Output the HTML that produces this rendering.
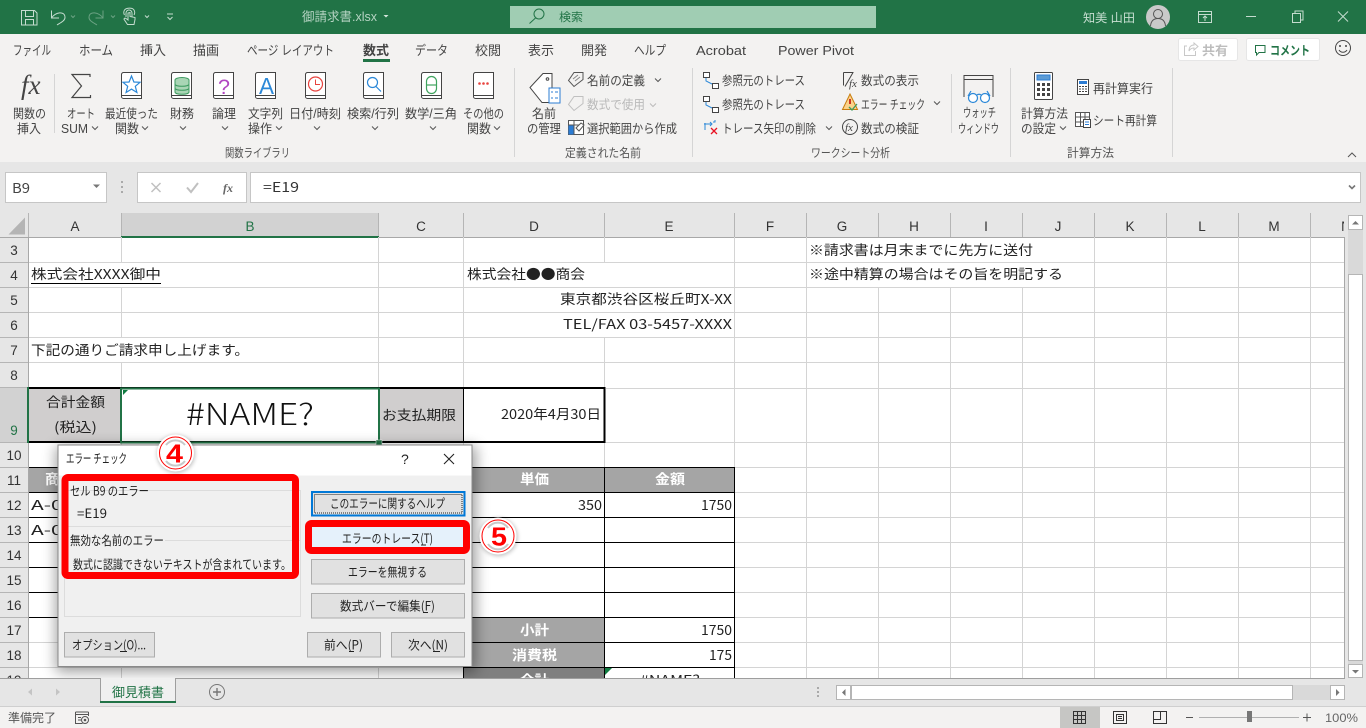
<!DOCTYPE html>
<html lang="ja"><head><meta charset="utf-8"><title>御請求書.xlsx</title>
<style>
html,body{margin:0;padding:0;background:#fff;width:1366px;height:728px;overflow:hidden}
svg{display:block;font-family:"Liberation Sans","Noto Sans CJK JP",sans-serif}
text{white-space:pre}
.t{font-size:12.5px;fill:#444}
.g{font-size:12px;fill:#555}
.tab{font-size:13px;fill:#444}
.c{font-size:13.5px;fill:#222;font-family:"Noto Sans CJK JP","Liberation Sans",sans-serif}
.w{font-size:13.5px;fill:#fff;font-family:"Noto Sans CJK JP","Liberation Sans",sans-serif}
.hd{font-size:13.5px;fill:#333;text-anchor:middle}
.d{font-size:12.5px;fill:#222;font-family:"Noto Sans CJK JP","Liberation Sans",sans-serif}
.ic{fill:none;stroke:#555;stroke-width:1}
.tb{fill:none;stroke:#c5dccf;stroke-width:1}
.gl{stroke:#d4d4d4;stroke-width:1}
.bk{stroke:#000;stroke-width:1}
.btn{fill:#e1e1e1;stroke:#adadad;stroke-width:1}
</style></head><body>
<svg width="1366" height="728" viewBox="0 0 1366 728" xmlns="http://www.w3.org/2000/svg">
<defs>
<path id="chev" d="M-3 -1.5L0 1.5L3 -1.5" fill="none" stroke="#555" stroke-width="1"/>
<g id="book"><path d="M.5 23V2.5a2 2 0 0 1 2-2h18v26H2.5a2 2 0 0 1-2-2z" fill="#fff" stroke="#444"/><path d="M1 23.5h19.5" stroke="#444" fill="none"/></g>
<clipPath id="sheet"><rect x="0" y="237" width="1345" height="441"/></clipPath>
<clipPath id="hdr"><rect x="0" y="213" width="1344" height="25"/></clipPath>
<filter id="sh" x="-10%" y="-15%" width="120%" height="130%"><feGaussianBlur stdDeviation="7"/></filter>
<filter id="sh2" x="-40%" y="-40%" width="180%" height="180%"><feGaussianBlur stdDeviation="2"/></filter>
</defs>

<!-- Title bar -->
<rect width="1366" height="34" fill="#217346"/>
<g class="tb">
<path d="M21.5 10.5h13l2.5 2.5v12h-15.5zM25.5 10.5v6h8v-6M25.5 25v-5.500h8v5.500"/>
<path d="M51.500 10.500v7.500h7.500M51.500 18C55 12 65 10.500 65 17.500C65 21 60 23 57 25"/>
<path d="M103 10.500v7.500h-7.500M103 18C99 12 89 10.500 89 17.500C89 21 94 23 97 25" opacity=".45"/>
<path d="M126 17v-4a3 3 0 0 1 6 0v4M124.500 15a5 5 0 0 1 0-5c2-2.500 8-2.500 9.500 0a5 5 0 0 1 0 5M128 13v7l-2-1.500c-1.500-1-2.500.5-1.500 1.500l3 4.500h6.500l1-5v-2l-5-1v-4z"/>
<path d="M71 15.500l2 2 2-2M111 15.500l2 2 2-2" opacity=".45"/>
<path d="M145 15.500l2 2 2-2M167 14h6M167.500 17l2.500 2.500 2.500-2.500"/>
</g>
<text x="302" y="21" font-size="12.500" fill="#b5d3c2" textLength="75" lengthAdjust="spacingAndGlyphs">御請求書.xlsx</text>
<path d="M383.500 15h5l-2.500 2.500z" fill="#d5e6dc"/>
<rect x="510" y="6" width="366" height="22" fill="#a0cdb3"/>
<circle cx="539" cy="14" r="5" fill="none" stroke="#217346"/><path d="M535.500 18l-6 5.500" stroke="#217346" fill="none"/>
<text x="559" y="21" font-size="11.500" fill="#217346" textLength="24" lengthAdjust="spacingAndGlyphs">検索</text>
<text x="1083" y="22" font-size="12" fill="#c8dfd2" textLength="52" lengthAdjust="spacingAndGlyphs">知美 山田</text>
<circle cx="1158" cy="17" r="12" fill="#c9c9c9"/>
<circle cx="1158" cy="14" r="4.500" fill="none" stroke="#555"/><path d="M1150.500 26c.5-5 3-7.500 7.500-7.500s7 2.500 7.500 7.500" fill="none" stroke="#555"/>
<g class="tb">
<path d="M1198.500 11.500h13v11h-13zM1198.500 14.500h13M1205 21v-5M1203 18l2-2 2 2"/>
<path d="M1246 16.500h10"/>
<path d="M1292.500 13.500h8v9h-8zM1295 13.500v-2.500h8v9h-2.500"/>
<path d="M1338 11.500l10 10M1348 11.500l-10 10"/>
</g>

<!-- Ribbon -->
<rect y="34" width="1366" height="128" fill="#f3f2f1"/>
<text class="tab" x="13" y="55" textLength="38" lengthAdjust="spacingAndGlyphs">ファイル</text>
<text class="tab" x="79" y="55" textLength="34" lengthAdjust="spacingAndGlyphs">ホーム</text>
<text class="tab" x="140" y="55" textLength="26" lengthAdjust="spacingAndGlyphs">挿入</text>
<text class="tab" x="193" y="55" textLength="26" lengthAdjust="spacingAndGlyphs">描画</text>
<text class="tab" x="247" y="55" textLength="87" lengthAdjust="spacingAndGlyphs">ページ レイアウト</text>
<text class="tab" x="363" y="55" textLength="26" lengthAdjust="spacingAndGlyphs" font-weight="bold">数式</text>
<rect x="363" y="59" width="27" height="3" fill="#217346"/>
<text class="tab" x="415" y="55" textLength="33" lengthAdjust="spacingAndGlyphs">データ</text>
<text class="tab" x="475" y="55" textLength="26" lengthAdjust="spacingAndGlyphs">校閲</text>
<text class="tab" x="528" y="55" textLength="26" lengthAdjust="spacingAndGlyphs">表示</text>
<text class="tab" x="581" y="55" textLength="26" lengthAdjust="spacingAndGlyphs">開発</text>
<text class="tab" x="634" y="55" textLength="32" lengthAdjust="spacingAndGlyphs">ヘルプ</text>
<text class="tab" x="696" y="55" textLength="50" lengthAdjust="spacingAndGlyphs" font-size="12.500">Acrobat</text>
<text class="tab" x="778" y="55" textLength="76" lengthAdjust="spacingAndGlyphs">Power Pivot</text>
<rect x="1178.500" y="38.500" width="59" height="22" rx="2" fill="#fff" stroke="#e6e6e6"/>
<path d="M1187 46h-2.500v9.500h11V51M1189 51c0-4 2-6 5-6v-2l4 3.500-4 3.500v-2c-2 0-4 1-5 3z" fill="none" stroke="#c8c8c8"/>
<text x="1202" y="55" font-size="12.500" fill="#bdbdbd" font-weight="bold" textLength="26" lengthAdjust="spacingAndGlyphs">共有</text>
<rect x="1246.500" y="38.500" width="73" height="22" rx="2" fill="#fff" stroke="#e6e6e6"/>
<path d="M1255.500 45.500h9.500v7h-6l-2.500 2.500v-2.500h-1z" fill="none" stroke="#217346"/>
<text x="1270" y="55" font-size="12.500" fill="#217346" font-weight="bold" textLength="40" lengthAdjust="spacingAndGlyphs">コメント</text>
<circle cx="1343" cy="48" r="7.500" fill="none" stroke="#444"/><circle cx="1340" cy="46" r="1" fill="#444"/><circle cx="1346" cy="46" r="1" fill="#444"/><path d="M1339 50c2 3 6 3 8 0" fill="none" stroke="#444"/>

<g stroke="#d5d5d5" fill="none"><path d="M54.500 74v59M514.500 68v89M692.500 68v89M951.500 74v59M1010.500 68v89M1172.500 68v89"/></g>

<!-- Function library -->
<text x="21" y="94" font-family="Liberation Serif,serif" font-style="italic" font-size="27" fill="#444">fx</text>
<path d="M90 77v-2.500H72L81.500 86 72 97.500h18.500V95" fill="none" stroke="#444" stroke-width="1.200"/>
<use href="#book" x="121" y="72"/><use href="#book" x="171" y="72"/><use href="#book" x="213" y="72"/><use href="#book" x="255" y="72"/><use href="#book" x="305" y="72"/><use href="#book" x="363" y="72"/><use href="#book" x="421" y="72"/><use href="#book" x="473" y="72"/>
<path d="M131.500 76l2.400 6 6.100.3-4.700 4 1.600 6.200-5.400-3.400-5.400 3.400 1.600-6.200-4.700-4 6.100-.3z" fill="none" stroke="#2b88d8" stroke-width="1.200"/>
<g fill="#a9d5b5" stroke="#3c9a5f"><ellipse cx="182" cy="80" rx="7" ry="2.500"/><path d="M175 80v12c0 3 14 3 14 0V80M175 84c0 3 14 3 14 0M175 88c0 3 14 3 14 0" /></g>
<text x="218" y="94" font-size="21" fill="#b146c2" textLength="12" lengthAdjust="spacingAndGlyphs">?</text>
<text x="259" y="94" font-size="23" fill="#2b88d8" textLength="15" lengthAdjust="spacingAndGlyphs">A</text>
<circle cx="315.500" cy="84" r="7" fill="none" stroke="#e8433e" stroke-width="1.200"/><path d="M315.500 79.500V84.500H320" fill="none" stroke="#e8433e"/>
<circle cx="372.500" cy="82.500" r="5" fill="none" stroke="#2b88d8" stroke-width="1.200"/><path d="M376 86.500l5 5" stroke="#2b88d8" stroke-width="1.200"/>
<rect x="426.500" y="76.500" width="10" height="17" rx="5" fill="none" stroke="#3fa35e" stroke-width="1.200"/><path d="M427 85h9" stroke="#3fa35e" stroke-width="1.200"/>
<g fill="#e8433e"><circle cx="479.500" cy="83.500" r="1.300"/><circle cx="483.500" cy="83.500" r="1.300"/><circle cx="487.500" cy="83.500" r="1.300"/></g>

<text class="t" x="13" y="118" textLength="33" lengthAdjust="spacingAndGlyphs">関数の</text>
<text class="t" x="17" y="133" textLength="24" lengthAdjust="spacingAndGlyphs">挿入</text>
<text class="t" x="67" y="118" textLength="28" lengthAdjust="spacingAndGlyphs">オート</text>
<text class="t" x="61" y="133" textLength="27" lengthAdjust="spacingAndGlyphs">SUM</text><use href="#chev" x="95" y="128"/>
<text class="t" x="105" y="118" textLength="53" lengthAdjust="spacingAndGlyphs">最近使った</text>
<text class="t" x="115" y="133" textLength="24" lengthAdjust="spacingAndGlyphs">関数</text><use href="#chev" x="145" y="128"/>
<text class="t" x="170" y="118" textLength="24" lengthAdjust="spacingAndGlyphs">財務</text><use href="#chev" x="183" y="128"/>
<text class="t" x="212" y="118" textLength="24" lengthAdjust="spacingAndGlyphs">論理</text><use href="#chev" x="225" y="128"/>
<text class="t" x="248" y="118" textLength="35" lengthAdjust="spacingAndGlyphs">文字列</text>
<text class="t" x="248" y="133" textLength="24" lengthAdjust="spacingAndGlyphs">操作</text><use href="#chev" x="279" y="128"/>
<text class="t" x="289" y="118" textLength="52" lengthAdjust="spacingAndGlyphs">日付/時刻</text><use href="#chev" x="317" y="128"/>
<text class="t" x="347" y="118" textLength="52" lengthAdjust="spacingAndGlyphs">検索/行列</text><use href="#chev" x="375" y="128"/>
<text class="t" x="405" y="118" textLength="52" lengthAdjust="spacingAndGlyphs">数学/三角</text><use href="#chev" x="433" y="128"/>
<text class="t" x="463" y="118" textLength="41" lengthAdjust="spacingAndGlyphs">その他の</text>
<text class="t" x="467" y="133" textLength="24" lengthAdjust="spacingAndGlyphs">関数</text><use href="#chev" x="497" y="128"/>
<text class="g" x="225" y="157" textLength="65" lengthAdjust="spacingAndGlyphs">関数ライブラリ</text>

<!-- Defined names -->
<path d="M552 73.500h-9l-13 14 12 15h10z" fill="#fff" stroke="#444"/>
<rect x="549" y="88" width="11" height="15" fill="#fff" stroke="#2b7cd3"/>
<path d="M551 92h2M555 92h3M551 98h2M555 98h3" stroke="#2b7cd3"/>
<circle cx="547.500" cy="79" r="1.300" fill="none" stroke="#444"/>
<text class="t" x="532" y="118" textLength="24" lengthAdjust="spacingAndGlyphs">名前</text>
<text class="t" x="527" y="133" textLength="34" lengthAdjust="spacingAndGlyphs">の管理</text>
<path d="M574 72.500h9v7l-9 7-5.500-6z" fill="none" stroke="#555"/><path d="M573 79l5-4M575 81l5-4" stroke="#888"/>
<text class="t" x="587" y="85" textLength="58" lengthAdjust="spacingAndGlyphs">名前の定義</text><use href="#chev" x="658" y="80"/>
<path d="M574 96.500h9v7l-9 7-5.500-6z" fill="none" stroke="#c0c0c0"/>
<text class="t" x="587" y="109" textLength="58" lengthAdjust="spacingAndGlyphs" style="fill:#b9b9b9">数式で使用</text><path d="M650 103.500l3 3 3-3" fill="none" stroke="#bbb"/>
<rect x="568.500" y="120.500" width="15" height="14" fill="#fff" stroke="#555"/><rect x="568.500" y="125" width="5.500" height="9.500" fill="#2b7cd3"/><path d="M568.500 125h15M574 120.500v14" stroke="#555"/><path d="M576 128l5-5 3 2-5 6z" fill="#fff" stroke="#555"/>
<text class="t" x="587" y="133" textLength="90" lengthAdjust="spacingAndGlyphs">選択範囲から作成</text>
<text class="g" x="565" y="157" textLength="76" lengthAdjust="spacingAndGlyphs">定義された名前</text>

<!-- Formula auditing -->
<g fill="#fff" stroke="#444"><rect x="703.500" y="72.500" width="6" height="5"/><rect x="712.500" y="83.500" width="6" height="5"/><rect x="703.500" y="96.500" width="6" height="5"/><rect x="712.500" y="107.500" width="6" height="5"/></g>
<path d="M706 78v3l6 3M706 102v3l6 3" fill="none" stroke="#2b88d8"/>
<path d="M704 124h7M710 122l2 2-2 2M705 130v-7" fill="none" stroke="#2b88d8"/><path d="M713 122h2v-2" fill="none" stroke="#2b88d8"/><path d="M711 128l6 6M717 128l-6 6" stroke="#e81123" stroke-width="1.300"/>
<text class="t" x="722" y="85" textLength="83" lengthAdjust="spacingAndGlyphs">参照元のトレース</text>
<text class="t" x="722" y="109" textLength="83" lengthAdjust="spacingAndGlyphs">参照先のトレース</text>
<text class="t" x="722" y="133" textLength="94" lengthAdjust="spacingAndGlyphs">トレース矢印の削除</text><use href="#chev" x="829" y="128"/>
<path d="M843.500 72.500h10M843.500 72.500v13M853 72.500l-8 14" fill="none" stroke="#444"/>
<text x="849" y="87" font-family="Liberation Serif,serif" font-style="italic" font-size="11" fill="#444">fx</text>
<path d="M850 94l7.500 15.500h-15z" fill="#fbd38a" stroke="#c87d0e"/><path d="M850 99v5" stroke="#c00000" stroke-width="1.500"/><path d="M849 107l3 3 5-6" fill="none" stroke="#3c9a5f" stroke-width="1.300"/>
<circle cx="850" cy="127" r="7.500" fill="none" stroke="#444"/><text x="845" y="131" font-family="Liberation Serif,serif" font-style="italic" font-size="11" fill="#444">fx</text>
<text class="t" x="861" y="85" textLength="58" lengthAdjust="spacingAndGlyphs">数式の表示</text>
<text class="t" x="861" y="109" textLength="64" lengthAdjust="spacingAndGlyphs">エラー チェック</text><use href="#chev" x="937" y="103"/>
<text class="t" x="861" y="133" textLength="58" lengthAdjust="spacingAndGlyphs">数式の検証</text>
<path d="M964 97V75.500h29V97M964 79.500h29" fill="none" stroke="#444"/>
<g fill="#fff" stroke="#2b88d8" stroke-width="1.200"><circle cx="973" cy="98" r="4.500"/><circle cx="985" cy="98" r="4.500"/><path d="M977 95c1-1 3-1 4 0M968 96l3-5M990 96l-3-5" fill="none"/></g>
<text class="t" x="963" y="117" textLength="33" lengthAdjust="spacingAndGlyphs">ウォッチ</text>
<text class="t" x="958" y="133" textLength="41" lengthAdjust="spacingAndGlyphs">ウィンドウ</text>
<text class="g" x="811" y="157" textLength="79" lengthAdjust="spacingAndGlyphs">ワークシート分析</text>

<!-- Calculation -->
<rect x="1034.500" y="72.500" width="18" height="27" rx="1" fill="#fff" stroke="#444"/><rect x="1037" y="75" width="13" height="5" fill="#5b9bd5" stroke="#2b7cd3"/>
<g fill="#444"><rect x="1037" y="83" width="3" height="3"/><rect x="1042" y="83" width="3" height="3"/><rect x="1047" y="83" width="3" height="3"/><rect x="1037" y="88" width="3" height="3"/><rect x="1042" y="88" width="3" height="3"/><rect x="1047" y="88" width="3" height="3"/><rect x="1037" y="93" width="3" height="3"/><rect x="1042" y="93" width="3" height="3"/><rect x="1047" y="93" width="3" height="3"/></g>
<text class="t" x="1021" y="118" textLength="47" lengthAdjust="spacingAndGlyphs">計算方法</text>
<text class="t" x="1021" y="133" textLength="35" lengthAdjust="spacingAndGlyphs">の設定</text><use href="#chev" x="1063" y="128"/>
<rect x="1077.500" y="79.500" width="11" height="15" fill="#fff" stroke="#444"/><rect x="1079" y="81" width="8" height="3" fill="#2b7cd3"/><path d="M1079 86.500h8M1079 89h8M1079 91.500h8" stroke="#444" stroke-dasharray="2 1"/>
<text class="t" x="1093" y="93" textLength="60" lengthAdjust="spacingAndGlyphs">再計算実行</text>
<path d="M1075.500 112.500h14v14h-14zM1075.500 117h14M1075.500 122h14M1080.500 112.500v14M1085 112.500v14" fill="#fff" stroke="#555"/><rect x="1083.500" y="119.500" width="7" height="8" fill="#fff" stroke="#444"/><path d="M1085 122h4M1085 124.500h4" stroke="#2b7cd3"/>
<text class="t" x="1093" y="125" textLength="64" lengthAdjust="spacingAndGlyphs">シート再計算</text>
<text class="g" x="1067" y="157" textLength="47" lengthAdjust="spacingAndGlyphs">計算方法</text>
<path d="M1348 157l4-4 4 4" fill="none" stroke="#555"/>

<!-- Formula bar -->
<rect y="162" width="1366" height="516" fill="#e6e6e6"/>
<rect x="5.500" y="172.500" width="101" height="30" fill="#fff" stroke="#c6c6c6"/>
<text x="12" y="193" font-size="13.500" fill="#444" textLength="18" lengthAdjust="spacingAndGlyphs" font-family="Noto Sans CJK JP,sans-serif">B9</text>
<path d="M93 184.500h7l-3.500 3.500z" fill="#777"/>
<g fill="#aaa"><rect x="121" y="181" width="2" height="2"/><rect x="121" y="186" width="2" height="2"/><rect x="121" y="191" width="2" height="2"/></g>
<rect x="137.500" y="172.500" width="109" height="30" fill="#fff" stroke="#c6c6c6"/>
<path d="M151.500 183l9 9M160.500 183l-9 9" stroke="#c0c0c0" stroke-width="1.500"/>
<path d="M187 187.500l4 4.500 7-9" fill="none" stroke="#c0c0c0" stroke-width="2"/>
<text x="223" y="192" font-family="Liberation Serif,serif" font-style="italic" font-weight="bold" font-size="12" fill="#666">fx</text>
<rect x="250.500" y="172.500" width="1110" height="30" fill="#fff" stroke="#c6c6c6"/>
<text x="263" y="192" font-size="13.500" fill="#333" textLength="36" lengthAdjust="spacingAndGlyphs" font-family="Noto Sans CJK JP,sans-serif">=E19</text>
<path d="M1349 185.500l3 3 3-3" fill="none" stroke="#777" stroke-width="1.600"/>

<!-- Headers -->
<rect x="0" y="213" width="1345" height="24" fill="#e6e6e6"/>
<rect x="121" y="213" width="258" height="24" fill="#d2d2d2"/>
<path d="M25 217.500v17H8.500z" fill="#b4b4b4"/>
<g stroke="#b5b5b5"><path d="M28.500 213v24M121.500 213v24M378.500 213v24M463.500 213v24M604.500 213v24M734.500 213v24M806.500 213v24M878.500 213v24M950.500 213v24M1022.500 213v24M1094.500 213v24M1166.500 213v24M1238.500 213v24M1310.500 213v24"/></g>
<path d="M0 237.500h1345" stroke="#a8a8a8"/>
<rect x="121" y="236" width="258" height="2" fill="#217346"/>
<g clip-path="url(#hdr)">
<text class="hd" x="75" y="231">A</text><text class="hd" x="250" y="231" style="fill:#217346">B</text><text class="hd" x="421" y="231">C</text><text class="hd" x="534" y="231">D</text><text class="hd" x="669" y="231">E</text><text class="hd" x="770" y="231">F</text><text class="hd" x="842" y="231">G</text><text class="hd" x="914" y="231">H</text><text class="hd" x="986" y="231">I</text><text class="hd" x="1058" y="231">J</text><text class="hd" x="1130" y="231">K</text><text class="hd" x="1202" y="231">L</text><text class="hd" x="1274" y="231">M</text><text class="hd" x="1346" y="231">N</text>
</g>

<!-- Sheet -->
<rect x="29" y="238" width="1315" height="440" fill="#fff"/>
<rect x="0" y="388" width="28" height="54" fill="#d2d2d2"/>
<g clip-path="url(#sheet)">
<g class="gl">
<path d="M29 262.500H1344M29 287.500H1344M29 312.500H1344M29 337.500H1344M29 362.500H1344M29 467.500H1344M29 492.500H1344M29 517.500H1344M29 542.500H1344M29 567.500H1344M29 592.500H1344M29 617.500H1344M29 642.500H1344M29 667.500H1344M29 442.500H1344M606 388.500H1344"/>
<path d="M121.500 237v25M121.500 287v50M121.500 362v26M121.500 442v236M378.500 237v151M378.500 442v236M463.500 237v151M463.500 442v25M604.500 237v25M604.500 337v51M604.500 442v25M734.500 237v441M806.500 237v441M878.500 287v391M950.500 287v391M1022.500 287v391M1094.500 237v441M1166.500 237v441M1238.500 237v441M1310.500 237v441"/>
</g>
<!-- row-9 fills -->
<rect x="29" y="389" width="92" height="53" fill="#d0cece"/>
<rect x="379" y="389" width="85" height="53" fill="#d0cece"/>
<!-- table fills -->
<rect x="29" y="468" width="575" height="24" fill="#a5a5a5"/><rect x="605" y="468" width="129" height="24" fill="#a5a5a5"/>
<rect x="464" y="618" width="140" height="49" fill="#a5a5a5"/>
<rect x="464" y="668" width="140" height="12" fill="#7f7f7f"/>
<rect x="29" y="668" width="29" height="11" fill="#fff"/>
<!-- black borders -->
<path d="M28 388h577M28 442h577" stroke="#000" stroke-width="2"/>
<path d="M604.500 387v56" stroke="#000" stroke-width="2"/>
<path d="M463.500 388v54" class="bk"/>
<g class="bk"><path d="M28 467.500h707M28 492.500h707M28 517.500h707M28 542.500h707M28 567.500h707M28 592.500h707M28 617.500h707M464 642.500h271M464 667.500h271"/>
<path d="M28.500 467v150M463.500 467v212M604.500 467v212M734.500 467v212"/></g>
<path d="M605 668h7l-7 7z" fill="#107c41"/>
<!-- Cell text -->
<text class="c" x="31" y="279" textLength="130" lengthAdjust="spacingAndGlyphs">株式会社XXXX御中</text>
<path d="M31 283.500h130" stroke="#000"/>
<text class="c" x="467" y="279" textLength="118" lengthAdjust="spacingAndGlyphs">株式会社●●商会</text>
<text class="c" x="809" y="255" textLength="224" lengthAdjust="spacingAndGlyphs">※請求書は月末までに先方に送付</text>
<text class="c" x="809" y="279" textLength="254" lengthAdjust="spacingAndGlyphs">※途中精算の場合はその旨を明記する</text>
<text class="c" x="560" y="304" textLength="172" lengthAdjust="spacingAndGlyphs">東京都渋谷区桜丘町X-XX</text>
<text class="c" x="563" y="329" textLength="169" lengthAdjust="spacingAndGlyphs">TEL/FAX 03-5457-XXXX</text>
<text class="c" x="31" y="355" textLength="218" lengthAdjust="spacingAndGlyphs">下記の通りご請求申し上げます。</text>
<text class="c" x="46" y="407" textLength="59" lengthAdjust="spacingAndGlyphs">合計金額</text>
<text class="c" x="54" y="432" textLength="43" lengthAdjust="spacingAndGlyphs">(税込)</text>
<text x="186" y="425" font-size="30" fill="#111" textLength="128" lengthAdjust="spacingAndGlyphs" font-family="Noto Sans CJK JP,sans-serif" font-weight="300">#NAME?</text>
<text class="c" x="382" y="420" textLength="74" lengthAdjust="spacingAndGlyphs">お支払期限</text>
<text class="c" x="501" y="419" textLength="100" lengthAdjust="spacingAndGlyphs">2020年4月30日</text>
<text class="w" x="45" y="484" font-weight="bold" textLength="30" lengthAdjust="spacingAndGlyphs">商品</text>
<text class="c" x="31" y="510" textLength="55" lengthAdjust="spacingAndGlyphs">A-001</text>
<text class="c" x="31" y="535" textLength="55" lengthAdjust="spacingAndGlyphs">A-002</text>
<text class="w" x="520" y="484" font-weight="bold" textLength="29" lengthAdjust="spacingAndGlyphs">単価</text>
<text class="w" x="655" y="484" font-weight="bold" textLength="30" lengthAdjust="spacingAndGlyphs">金額</text>
<text class="c" x="578" y="510" textLength="24" lengthAdjust="spacingAndGlyphs">350</text>
<text class="c" x="701" y="510" textLength="31" lengthAdjust="spacingAndGlyphs">1750</text>
<text class="w" x="520" y="635" font-weight="bold" textLength="29" lengthAdjust="spacingAndGlyphs">小計</text>
<text class="c" x="701" y="635" textLength="31" lengthAdjust="spacingAndGlyphs">1750</text>
<text class="w" x="512" y="660" font-weight="bold" textLength="45" lengthAdjust="spacingAndGlyphs">消費税</text>
<text class="c" x="709" y="660" textLength="23" lengthAdjust="spacingAndGlyphs">175</text>
<text class="w" x="520" y="685" font-weight="bold" textLength="29" lengthAdjust="spacingAndGlyphs">合計</text>
<text class="c" x="640" y="685" textLength="60" lengthAdjust="spacingAndGlyphs">#NAME?</text>
</g>
<!-- row header lines and numbers -->
<g stroke="#b5b5b5"><path d="M0 262.500h28M0 287.500h28M0 312.500h28M0 337.500h28M0 362.500h28M0 387.500h28M0 442.500h28M0 467.500h28M0 492.500h28M0 517.500h28M0 542.500h28M0 567.500h28M0 592.500h28M0 617.500h28M0 642.500h28M0 667.500h28"/></g>
<path d="M28.500 237v151M28.500 442v236" stroke="#a8a8a8"/>
<path d="M1344.500 237v441" stroke="#a8a8a8"/>
<path d="M28 387v56" stroke="#217346" stroke-width="2"/>
<g>
<text class="hd" x="14" y="255">3</text><text class="hd" x="14" y="280">4</text><text class="hd" x="14" y="305">5</text><text class="hd" x="14" y="330">6</text><text class="hd" x="14" y="355">7</text><text class="hd" x="14" y="380">8</text>
<text class="hd" x="14" y="435" style="fill:#217346">9</text>
<text class="hd" x="14" y="460">10</text><text class="hd" x="14" y="485">11</text><text class="hd" x="14" y="510">12</text><text class="hd" x="14" y="535">13</text><text class="hd" x="14" y="560">14</text><text class="hd" x="14" y="585">15</text><text class="hd" x="14" y="610">16</text><text class="hd" x="14" y="635">17</text><text class="hd" x="14" y="660">18</text>
</g>
<g clip-path="url(#sheet)"><rect x="0" y="668" width="28" height="12" fill="#e6e6e6"/><text class="hd" x="14" y="685">19</text></g>
<!-- selection -->
<path d="M123 390h5l-5 5z" fill="#107c41"/>
<rect x="121" y="388.500" width="258" height="54" fill="none" stroke="#217346" stroke-width="2"/>
<rect x="376" y="440" width="6" height="6" fill="#217346" stroke="#fff" stroke-width=".5"/>

<!-- Vertical scrollbar -->
<rect x="1345" y="213" width="21" height="465" fill="#e6e6e6"/>
<rect x="1348" y="230" width="15" height="435" fill="#d9d9d9"/>
<rect x="1348.500" y="215.500" width="14" height="14" fill="#fff" stroke="#b5b5b5"/><path d="M1352 224.500l3.500-3.500 3.500 3.500z" fill="#777"/>
<rect x="1348.500" y="274.500" width="14" height="386" fill="#fff" stroke="#b5b5b5"/>
<rect x="1348.500" y="664.500" width="14" height="13" fill="#fff" stroke="#b5b5b5"/><path d="M1352 670h7l-3.500 3.500z" fill="#777"/>

<!-- Dialog -->
<rect x="56" y="446" width="420" height="226" fill="#000" opacity=".38" filter="url(#sh)"/>
<rect x="58" y="445" width="414" height="221.500" fill="#f0f0f0" stroke="#8a8a8a"/>
<rect x="58.500" y="445.500" width="413" height="30" fill="#fff"/>
<text class="d" x="66" y="463" textLength="61" lengthAdjust="spacingAndGlyphs">エラー チェック</text>
<text x="401" y="464" font-size="14" fill="#222">?</text>
<path d="M444 454l10 10M454 454l-10 10" stroke="#222" stroke-width="1.100"/>
<rect x="64.500" y="490.500" width="236" height="126" fill="none" stroke="#dcdcdc"/>
<path d="M150 490.500h141M68 526.500h223M165 540.500h136" stroke="#dcdcdc"/>
<text class="d" x="70" y="495.500" textLength="79" lengthAdjust="spacingAndGlyphs">セル B9 のエラー</text>
<text class="d" x="77" y="518" textLength="30" lengthAdjust="spacingAndGlyphs">=E19</text>
<text class="d" x="70" y="545" textLength="94" lengthAdjust="spacingAndGlyphs">無効な名前のエラー</text>
<text class="d" x="73" y="569" textLength="218" lengthAdjust="spacingAndGlyphs">数式に認識できないテキストが含まれています。</text>
<rect x="65" y="477.500" width="230.500" height="98" rx="3" fill="none" stroke="#ff0000" stroke-width="7"/>
<rect x="312" y="492" width="152.500" height="23.500" fill="#e1e1e1" stroke="#0078d7" stroke-width="2"/>
<rect x="314.500" y="494.500" width="147.500" height="18.500" fill="none" stroke="#222" stroke-dasharray="1 1"/>
<text class="d" x="330" y="508" textLength="115" lengthAdjust="spacingAndGlyphs">このエラーに関するヘルプ</text>
<rect x="311" y="526" width="154" height="23" fill="#e5f1fb"/>
<text class="d" x="342" y="543" textLength="91" lengthAdjust="spacingAndGlyphs">エラーのトレース(T)</text>
<path d="M421 545h5" stroke="#222"/>
<rect x="308.500" y="523.500" width="158" height="27" rx="3" fill="none" stroke="#ff0000" stroke-width="7"/>
<rect x="311.500" y="559.500" width="153" height="24.500" class="btn"/>
<text class="d" x="348" y="576.500" textLength="79" lengthAdjust="spacingAndGlyphs">エラーを無視する</text>
<rect x="311.500" y="593.500" width="153" height="24.500" class="btn"/>
<text class="d" x="340" y="610.500" textLength="95" lengthAdjust="spacingAndGlyphs">数式バーで編集(F)</text>
<path d="M423 612.500h5" stroke="#222"/>
<rect x="64.500" y="632.500" width="90" height="24.500" class="btn"/>
<text class="d" x="72" y="649.500" textLength="74" lengthAdjust="spacingAndGlyphs">オプション(O)...</text>
<path d="M120 651.500h7" stroke="#222"/>
<rect x="307.500" y="632.500" width="73" height="24.500" class="btn"/>
<text class="d" x="324" y="649.500" textLength="39" lengthAdjust="spacingAndGlyphs">前へ(P)</text>
<path d="M349 651.500h5" stroke="#222"/>
<rect x="391.500" y="632.500" width="73" height="24.500" class="btn"/>
<text class="d" x="408" y="649.500" textLength="40" lengthAdjust="spacingAndGlyphs">次へ(N)</text>
<path d="M433 651.500h7" stroke="#222"/>

<!-- Callouts -->
<circle cx="176" cy="454" r="19" fill="#000" opacity=".25" filter="url(#sh2)"/>
<circle cx="175.500" cy="453" r="18.500" fill="#fff"/>
<circle cx="175.500" cy="453" r="16" fill="#fff" stroke="#ff0000"/>
<path d="M166 445a12 12 0 0 1 19 0M166 461a12 12 0 0 0 19 0" fill="none" stroke="#c8c8c8" stroke-width="2"/>
<text x="166" y="462.500" font-size="26" font-weight="bold" fill="#ff0000" textLength="17" lengthAdjust="spacingAndGlyphs">4</text>
<circle cx="498.500" cy="537" r="19" fill="#000" opacity=".25" filter="url(#sh2)"/>
<circle cx="498" cy="536" r="18.500" fill="#fff"/>
<circle cx="498" cy="536" r="16" fill="#fff" stroke="#ff0000"/>
<path d="M488 528a12 12 0 0 1 20 0M488 544a12 12 0 0 0 20 0" fill="none" stroke="#c8c8c8" stroke-width="2"/>
<text x="491" y="545.500" font-size="26" font-weight="bold" fill="#ff0000" textLength="16" lengthAdjust="spacingAndGlyphs">5</text>

<!-- Sheet tabs -->
<rect y="678" width="1366" height="29" fill="#e6e6e6"/>
<path d="M0 678.500h100M175 678.500h1170" stroke="#9e9e9e"/>
<path d="M32 688.500v7l-4-3.500zM56 688.500v7l4-3.500z" fill="#c4c4c4"/>
<path d="M100.500 678v24M175.500 678v24" stroke="#9e9e9e"/>
<rect x="101" y="678" width="74" height="23" fill="#f0f0f0"/>
<rect x="100" y="701" width="76" height="2" fill="#217346"/>
<text x="112" y="697" font-size="13" fill="#217346" textLength="52" lengthAdjust="spacingAndGlyphs">御見積書</text>
<circle cx="217" cy="692" r="7.500" fill="none" stroke="#777"/><path d="M213 692h8M217 688v8" stroke="#777" stroke-width="1.400"/>
<g fill="#aaa"><rect x="817" y="687" width="2" height="2"/><rect x="817" y="691" width="2" height="2"/><rect x="817" y="695" width="2" height="2"/></g>
<rect x="836" y="685" width="508" height="15" fill="#d9d9d9"/>
<rect x="836.500" y="685.500" width="14" height="14" fill="#fff" stroke="#b5b5b5"/><path d="M845.500 689v7l-3.500-3.500z" fill="#777"/>
<rect x="851.500" y="685.500" width="441" height="14" fill="#fff" stroke="#b5b5b5"/>
<rect x="1330.500" y="685.500" width="14" height="14" fill="#fff" stroke="#b5b5b5"/><path d="M1336 689v7l3.500-3.500z" fill="#777"/>

<!-- Status bar -->
<rect y="706" width="1366" height="22" fill="#f3f2f1"/>
<path d="M0 706.500h1366" stroke="#cfcfcf"/>
<text x="8" y="722" font-size="12" fill="#555" textLength="48" lengthAdjust="spacingAndGlyphs">準備完了</text>
<path d="M75.500 712h13M75.500 714.500h13M75.500 712v11.500h7M88.500 712v4M78 717.500h3M78 720h3" fill="none" stroke="#555"/><circle cx="85" cy="720" r="3.500" fill="none" stroke="#555"/><circle cx="85" cy="720" r="1.300" fill="#555"/>
<rect x="1060" y="707" width="40" height="21" fill="#c6c6c4"/>
<path d="M1073.500 711.500h12v12h-12zM1073.500 715.500h12M1073.500 719.500h12M1077.500 711.500v12M1081.500 711.500v12" fill="none" stroke="#333"/>
<path d="M1113.500 711.500h13v12h-13z M1116.500 714.500h7v6h-7z M1118 716.500h4M1118 718.500h4" fill="none" stroke="#333"/>
<path d="M1153.500 711.500h13v12h-13zM1153.500 719.500h7v-8" fill="none" stroke="#333"/>
<path d="M1186 717.500h7" stroke="#555"/>
<path d="M1199 717.500h100" stroke="#b0b0b0"/>
<rect x="1247" y="711" width="5" height="11" fill="#777"/>
<path d="M1303 717.500h8M1307 713.500v8" stroke="#555"/>
<text x="1325" y="722" font-size="12" fill="#666" textLength="33" lengthAdjust="spacingAndGlyphs">100%</text>
</svg>
</body></html>
